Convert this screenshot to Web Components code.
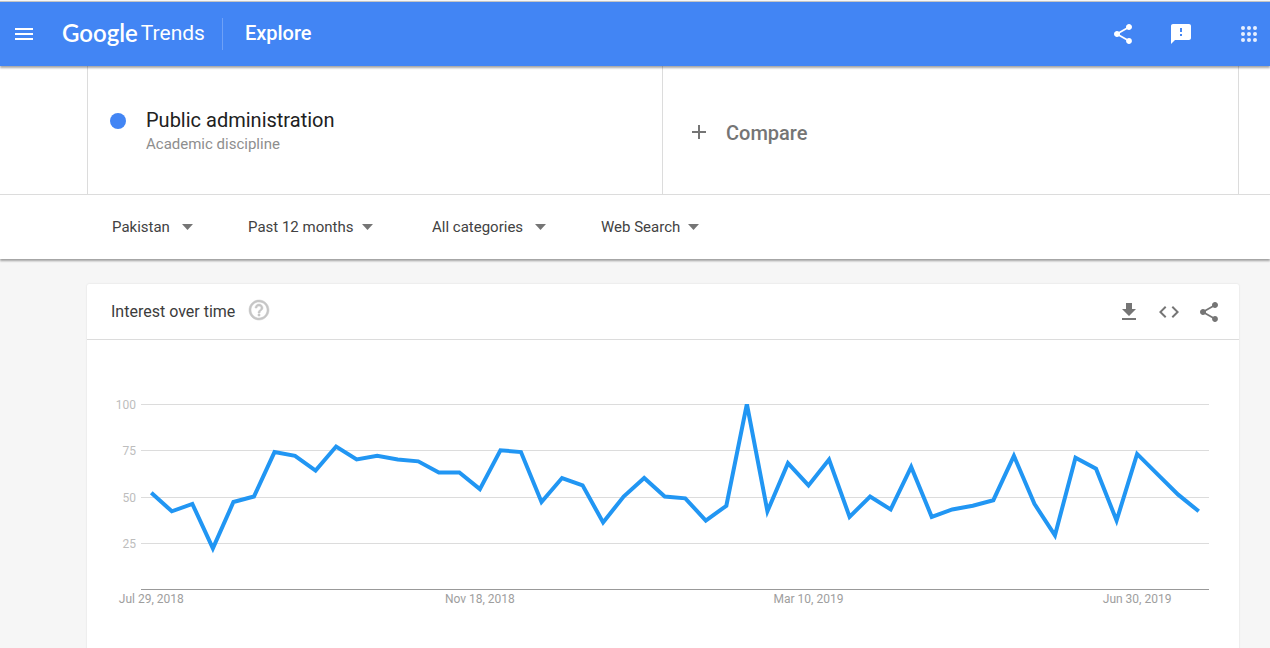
<!DOCTYPE html>
<html lang="en">
<head>
<meta charset="utf-8">
<meta name="viewport" content="width=device-width, initial-scale=1">
<title>Public administration - Explore - Google Trends</title>
<style>
  html { background: #f6f6f6; }
  body { margin: 0; font-family: Roboto, "Liberation Sans", sans-serif; color: #212121; }
</style>
</head>
<body>
<trends-app></trends-app>

<script>
const ICONS = {
  menu: '<path d="M3 18h18v-2H3v2zm0-5h18v-2H3v2zm0-7v2h18V6H3z"/>',
  share: '<path d="M18 16.08c-.76 0-1.44.3-1.96.77L8.91 12.7c.05-.23.09-.46.09-.7s-.04-.47-.09-.7l7.05-4.11c.54.5 1.25.81 2.04.81 1.66 0 3-1.34 3-3s-1.34-3-3-3-3 1.34-3 3c0 .24.04.47.09.7L8.04 9.81C7.5 9.31 6.79 9 6 9c-1.66 0-3 1.34-3 3s1.34 3 3 3c.79 0 1.5-.31 2.04-.81l7.12 4.16c-.05.21-.08.43-.08.65 0 1.61 1.31 2.92 2.92 2.92s2.92-1.31 2.92-2.92-1.31-2.92-2.92-2.92z"/>',
  feedback: '<path d="M20 2H4c-1.1 0-1.99.9-1.99 2L2 22l4-4h14c1.1 0 2-.9 2-2V4c0-1.1-.9-2-2-2zm-7 12h-2v-2h2v2zm0-4h-2V6h2v4z"/>',
  apps: '<g fill-opacity=".88"><circle cx="6" cy="6" r="2"/><circle cx="12" cy="6" r="2"/><circle cx="18" cy="6" r="2"/><circle cx="6" cy="12" r="2"/><circle cx="12" cy="12" r="2"/><circle cx="18" cy="12" r="2"/><circle cx="6" cy="18" r="2"/><circle cx="12" cy="18" r="2"/><circle cx="18" cy="18" r="2"/></g>',
  add: '<path d="M19 13h-6v6h-2v-6H5v-2h6V5h2v6h6v2z"/>',
  help: '<path stroke="currentColor" stroke-width=".5" d="M11 18h2v-2h-2v2zm1-16C6.48 2 2 6.48 2 12s4.48 10 10 10 10-4.48 10-10S17.52 2 12 2zm0 18c-4.41 0-8-3.59-8-8s3.59-8 8-8 8 3.59 8 8-3.59 8-8 8zm0-14c-2.21 0-4 1.79-4 4h2c0-1.1.9-2 2-2s2 .9 2 2c0 2-3 1.75-3 5h2c0-2.25 3-2.5 3-5 0-2.21-1.79-4-4-4z"/>',
  download: '<path d="M19 9h-4V3H9v6H5l7 7 7-7zM5 18v2h14v-2H5z"/>',
  code: '<path d="M9.4 16.6L4.8 12l4.6-4.6L8 6l-6 6 6 6 1.4-1.4zm5.2 0l4.6-4.6-4.6-4.6L16 6l6 6-6 6-1.4-1.4z"/>'
};

function define(name, html, setup) {
  const template = document.createElement('template');
  template.innerHTML = html;
  customElements.define(name, class extends HTMLElement {
    constructor() {
      super();
      this.attachShadow({ mode: 'open' }).append(template.content.cloneNode(true));
    }
    connectedCallback() { if (setup) setup(this, this.shadowRoot); }
  });
}

define('icon-button', `
  <style>
    :host { display: block; flex: none; }
    button { display: block; padding: 0; border: 0; background: none; color: inherit; cursor: pointer; }
    svg { display: block; width: 24px; height: 24px; fill: currentColor; }
  </style>
  <button type="button"><svg viewBox="0 0 24 24" aria-hidden="true"></svg></button>`,
  (el, root) => {
    root.querySelector('svg').innerHTML = ICONS[el.getAttribute('icon')];
    root.querySelector('button').setAttribute('aria-label', el.getAttribute('label'));
  });

define('trends-header', `
  <style>
    :host { display: block; position: relative; z-index: 2; }
    header { display: flex; align-items: center; height: 64px; padding: 0 9px 0 12px;
      margin-top: 1px; border-top: 1px solid #c4c4c4; background: #4285f4; color: #fff;
      box-shadow: 0 2px 2px rgba(0,0,0,.35); }
    .logo { display: flex; align-items: center; gap: 3px; margin-left: 26px; padding-bottom: 2px;
      color: inherit; text-decoration: none; }
    .google { font: 600 24px/32px Lato, sans-serif; }
    .trends { font: 400 21px/32px Roboto, sans-serif; }
    .divider { width: 1px; height: 32px; margin: 0 22px 0 17px; background: #6ea1f7; }
    h1 { margin: 0; padding-bottom: 2px; font-size: 20px; line-height: 32px; font-weight: 500; }
    nav { display: flex; margin-left: auto; }
    .feedback { margin-left: 34px; }
    .apps { margin-left: 44px; }
  </style>
  <header>
    <icon-button icon="menu" label="Main menu"></icon-button>
    <a class="logo" href="#"><span class="google">Google</span><span class="trends">Trends</span></a>
    <div class="divider"></div>
    <h1>Explore</h1>
    <nav>
      <icon-button icon="share" label="Share"></icon-button>
      <icon-button class="feedback" icon="feedback" label="Send feedback"></icon-button>
      <icon-button class="apps" icon="apps" label="Google apps"></icon-button>
    </nav>
  </header>`);

define('search-term', `
  <style>
    :host { display: flex; align-items: flex-start; gap: 20px; padding: 40px 22px; box-sizing: border-box; }
    .dot { flex: none; width: 16px; height: 16px; margin-top: 7px; border-radius: 50%; background: #4285f4; }
    .name { font-size: 20px; line-height: 28px; color: #212121; }
    .kind { font-size: 15px; line-height: 20px; color: #8e8e8e; }
  </style>
  <span class="dot"></span>
  <div><div class="name"><slot></slot></div><div class="kind"><slot name="kind"></slot></div></div>`);

define('compare-button', `
  <style>
    :host { display: flex; }
    button { display: flex; align-items: center; gap: 15px; flex: 1; padding: 4px 24px 0; border: 0;
      background: none; color: #757575; font: 500 20px/28px Roboto, sans-serif; text-align: left; cursor: pointer; }
    svg { width: 24px; height: 24px; fill: currentColor; }
    span { padding-top: 2px; }
  </style>
  <button type="button"><svg viewBox="0 0 24 24" aria-hidden="true">${ICONS.add}</svg><span><slot></slot></span></button>`);

define('filter-select', `
  <style>
    :host { display: block; }
    label { display: flex; align-items: center; justify-content: space-between; }
    select { appearance: none; margin: 0; padding: 0; border: 0; background: none; color: #424242;
      font: 400 15px/24px Roboto, sans-serif; cursor: pointer; }
    svg { flex: none; width: 11px; height: 6px; fill: #757575; pointer-events: none; }
  </style>
  <label><select><option></option></select><svg viewBox="0 0 11 6" aria-hidden="true"><path d="M0 0h11L5.5 6z"/></svg></label>`,
  (el, root) => {
    root.querySelector('option').textContent = el.getAttribute('value');
    root.querySelector('select').setAttribute('aria-label', el.getAttribute('label'));
  });

define('explore-bar', `
  <style>
    :host { display: block; position: relative; z-index: 1; background: #fff; box-shadow: 0 2px 2px rgba(0,0,0,.35); }
    .terms { padding: 0 31px 0 87px; border-bottom: 1px solid #dcdcdc; }
    .cells { display: grid; grid-template-columns: 1fr 1fr; height: 128px; border: solid #dcdcdc; border-width: 0 1px; }
    search-term { border-right: 1px solid #dcdcdc; }
    .filters { display: flex; gap: 55px; align-items: center; height: 64px; padding-left: 112px; }
    .place { width: 81px; }
    .time { width: 125px; margin-right: 4px; }
    .category { width: 114px; }
    .kind { width: 98px; }
  </style>
  <div class="terms"><div class="cells">
    <search-term>Public administration<span slot="kind">Academic discipline</span></search-term>
    <compare-button>Compare</compare-button>
  </div></div>
  <div class="filters">
    <filter-select class="place" label="Location" value="Pakistan"></filter-select>
    <filter-select class="time" label="Time range" value="Past 12 months"></filter-select>
    <filter-select class="category" label="Category" value="All categories"></filter-select>
    <filter-select class="kind" label="Search type" value="Web Search"></filter-select>
  </div>`);

/* Weekly line chart: the values span the plot's width, whatever it is. */
define('line-chart', `
  <style>
    :host { display: block; }
    svg { display: block; overflow: visible; }
    .frame { width: 100%; height: 206px; }
    .plot { overflow: hidden; }
    .grid { stroke: #dcdcdc; }
    .base { stroke: #999; }
    polyline { fill: none; stroke: #2196f3; stroke-width: 4; vector-effect: non-scaling-stroke; stroke-miterlimit: 10; }
    text { font: 400 12px Roboto, sans-serif; }
    .y { fill: #bdbdbd; text-anchor: end; }
    .x { fill: #9e9e9e; text-anchor: middle; }
  </style>
  <svg class="frame" role="img" aria-label="Interest over time"></svg>`,
  (el, root) => {
    const values = el.getAttribute('values').split(' ').map(Number);
    const dates = JSON.parse(el.getAttribute('dates'));
    const height = 185;
    let out = '';
    for (const v of [100, 75, 50, 25, 0]) {
      const y = Math.round(height * (100 - v) / 100);
      out += `<line class="${v ? 'grid' : 'base'}" x1="0" x2="100%" y1="${y}" y2="${y}" transform="translate(0 .5)"/>`;
      if (v) out += `<text class="y" x="-5" y="${y + 5}">${v}</text>`;
    }
    for (const [week, date] of Object.entries(dates))
      out += `<text class="x" x="${(+week + .5) / values.length * 100}%" y="${height + 14}">${date}</text>`;
    const points = values.map((v, i) => `${i + .5},${100 - v}`).join(' ');
    out += `<svg class="plot" width="100%" height="${height}" viewBox="0 0 ${values.length} 100" preserveAspectRatio="none"><polyline points="${points}"/></svg>`;
    root.querySelector('.frame').innerHTML = out;
  });

define('trend-card', `
  <style>
    :host { display: block; background: #fff; border-radius: 2px; box-shadow: 0 0 2px rgba(0,0,0,.12); }
    header { display: flex; align-items: center; height: 55px; padding: 0 18px 0 24px; border-bottom: 1px solid #dcdcdc; }
    h2 { margin: 0 12px 0 0; font-size: 16px; line-height: 24px; font-weight: 400; color: #3c3c3c; }
    .help { color: #c6c6c6; padding-bottom: 4px; }
    .actions { display: flex; gap: 16px; margin-left: auto; color: #757575; }
  </style>
  <header>
    <h2><slot name="title"></slot></h2>
    <icon-button class="help" icon="help" label="Help"></icon-button>
    <div class="actions">
      <icon-button icon="download" label="Download CSV"></icon-button>
      <icon-button icon="code" label="Embed"></icon-button>
      <icon-button icon="share" label="Share chart"></icon-button>
    </div>
  </header>
  <slot></slot>`);

define('trends-app', `
  <style>
    :host { display: block; }
    main { padding: 25px 31px 0 87px; }
    line-chart { padding: 64px 30px 60px 54px; }
  </style>
  <trends-header></trends-header>
  <explore-bar></explore-bar>
  <main>
    <trend-card>
      <span slot="title">Interest over time</span>
      <line-chart
        values="52 42 46 22 47 50 74 72 64 77 70 72 70 69 63 63 54 75 74 47 60 56 36 50 60 50 49 37 45 100 42 68 56 70 39 50 43 66 39 43 45 48 72 46 29 71 65 37 73 62 51 42"
        dates='{"0":"Jul 29, 2018","16":"Nov 18, 2018","32":"Mar 10, 2019","48":"Jun 30, 2019"}'></line-chart>
    </trend-card>
  </main>`);
</script>
</body>
</html>
